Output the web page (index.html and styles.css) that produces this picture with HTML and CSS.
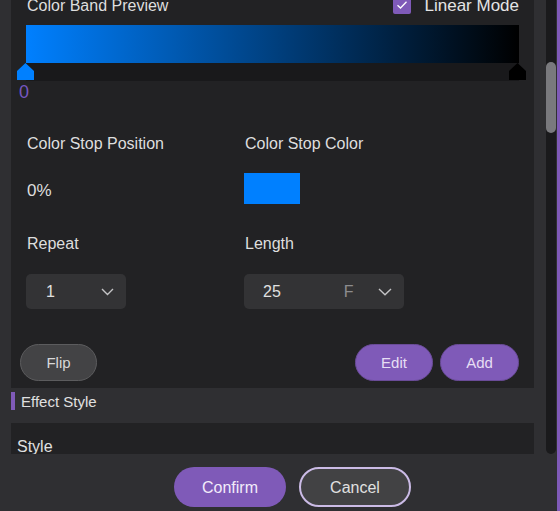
FILE: index.html
```html
<!DOCTYPE html>
<html>
<head>
<meta charset="utf-8">
<link rel="stylesheet" href="styles.css">
</head>
<body>
<div class="shell">
  <div class="main">
    <div class="scroll-area">
      <div class="content">
        <div class="panel">
          <div class="head-row">
            <span class="title">Color Band Preview</span>
            <span class="linear">
              <span class="checkbox">
                <svg width="12" height="10" viewBox="0 0 12 10"><path d="M1.5 5.2 L4.5 8 L10.5 1.8" fill="none" stroke="#ffffff" stroke-width="1.3"/></svg>
              </span>
              <span class="linear-label">Linear Mode</span>
            </span>
          </div>
          <div class="band"></div>
          <div class="track">
            <span class="marker marker-blue"></span>
            <span class="marker marker-black"></span>
          </div>
          <div class="stop-label">0</div>
          <div class="grid">
            <div class="label">Color Stop Position</div>
            <div class="label">Color Stop Color</div>
            <div class="value">0%</div>
            <div class="value"><span class="swatch"></span></div>
            <div class="label label-gap">Repeat</div>
            <div class="label label-gap">Length</div>
            <div class="select select-small">
              <span class="sel-text">1</span>
              <svg class="chev chev-1" width="13" height="8" viewBox="0 0 13 8"><path d="M1 1 L6.5 6.5 L12 1" fill="none" stroke="#c4c4c6" stroke-width="1.4"/></svg>
            </div>
            <div class="select select-wide">
              <span class="sel-text">25</span>
              <span class="unit">F</span>
              <svg class="chev chev-2" width="14" height="8" viewBox="0 0 14 8"><path d="M1 1 L7 6.8 L13 1" fill="none" stroke="#c4c4c6" stroke-width="1.4"/></svg>
            </div>
          </div>
          <div class="btn-row">
            <button class="pill pill-grey">Flip</button>
            <span class="spacer"></span>
            <button class="pill pill-purple pill-edit">Edit</button>
            <button class="pill pill-purple pill-add">Add</button>
          </div>
        </div>
        <div class="section-head">
          <span class="section-bar"></span>
          <span class="section-title">Effect Style</span>
        </div>
        <div class="style-row">Style</div>
      </div>
      <div class="scrollbar"><div class="thumb"></div></div>
    </div>
    <div class="footer">
      <button class="fbtn fbtn-confirm">Confirm</button>
      <button class="fbtn fbtn-cancel">Cancel</button>
    </div>
  </div>
  <div class="edge"></div>
</div>
</body>
</html>
```
FILE: styles.css
```css
* { box-sizing: border-box; }
html, body {
  margin: 0;
  padding: 0;
  width: 560px;
  height: 511px;
  overflow: hidden;
  background: #2f2f32;
  font-family: "Liberation Sans", Arial, sans-serif;
  color: #dedede;
}
.shell {
  display: flex;
  width: 560px;
  height: 511px;
}
.main {
  width: 557px;
  display: flex;
  flex-direction: column;
}
.edge {
  width: 3px;
  background: #7f5ab8;
}
.scroll-area {
  height: 454px;
  display: flex;
  padding-left: 11px;
}
.content {
  width: 523px;
  height: 454px;
  overflow: hidden;
  display: flex;
  flex-direction: column;
}
.scrollbar {
  width: 10px;
  margin-left: 12px;
  height: 454px;
  background: #1a1a1c;
  border-radius: 0 0 5px 5px;
  padding-top: 62px;
}
.thumb {
  width: 10px;
  height: 71px;
  border-radius: 5px;
  background: #79797d;
}
.panel {
  background: #222224;
  height: 388px;
  padding: 0 15px;
  flex: none;
}
.head-row {
  display: flex;
  align-items: center;
  justify-content: space-between;
  height: 18px;
  margin-top: -3px;
}
.title {
  font-size: 16px;
  line-height: 18px;
  padding-left: 1px;
}
.linear {
  display: flex;
  align-items: center;
}
.checkbox {
  width: 18px;
  height: 18px;
  border-radius: 2px;
  background: #7f5ab8;
  display: flex;
  align-items: center;
  justify-content: center;
  margin-top: -2px;
}
.linear-label {
  font-size: 17px;
  line-height: 18px;
  margin-left: 13px;
  color: #e4e4e4;
}
.band {
  margin-top: 10px;
  height: 38px;
  background: linear-gradient(to right, #0080ff 0%, #000000 100%);
}
.track {
  position: relative;
  height: 18px;
  background: #19191b;
}
.marker {
  position: absolute;
  top: 0;
  width: 17px;
  height: 17px;
  clip-path: polygon(50% 0, 100% 47%, 100% 100%, 0 100%, 0 47%);
}
.marker-blue {
  left: -9px;
  background: #0080ff;
}
.marker-black {
  right: -7px;
  background: #000000;
}
.stop-label {
  margin-top: 1px;
  margin-left: -7px;
  font-size: 18px;
  line-height: 20px;
  color: #7657c0;
}
.grid {
  display: grid;
  grid-template-columns: 218px 1fr;
  margin-top: 32px;
}
.label {
  font-size: 16px;
  line-height: 20px;
  padding-left: 1px;
}
.label-gap {
  margin-top: 30px;
}
.value {
  margin-top: 19px;
  height: 31px;
  display: flex;
  align-items: center;
  font-size: 17px;
  padding-left: 1px;
  padding-top: 4px;
}
.swatch {
  display: block;
  width: 56px;
  height: 31px;
  background: #0080ff;
  margin-top: -4px;
  margin-left: -1px;
}
.select {
  margin-top: 20px;
  height: 35px;
  background: #333335;
  border-radius: 5px;
  display: flex;
  align-items: center;
  padding-left: 20px;
  font-size: 16px;
  color: #e0e0e0;
}
.select-small { width: 100px; }
.select-wide { width: 160px; padding-left: 19px; }
.sel-text { line-height: 20px; }
.chev-1 { margin-left: 46px; }
.unit {
  margin-left: 63px;
  color: #8c8c8e;
  line-height: 20px;
}
.chev-2 { margin-left: 24px; }
.btn-row {
  display: flex;
  margin-top: 35px;
  margin-left: -6px;
}
.spacer { flex: 1; }
.pill {
  height: 37px;
  border-radius: 19px;
  font-family: "Liberation Sans", Arial, sans-serif;
  font-size: 15px;
  padding: 0;
  cursor: pointer;
}
.pill-grey {
  width: 77px;
  background: #434345;
  border: 1px solid #5c5c5e;
  color: #d8d8d8;
}
.pill-purple {
  background: #7f5ab8;
  border: 1px solid #6a4c98;
  color: #e6def4;
}
.pill-edit { width: 78px; }
.pill-add { width: 79px; margin-left: 7px; }
.section-head {
  height: 35px;
  flex: none;
  display: flex;
  align-items: flex-start;
}
.section-bar {
  width: 4px;
  height: 18px;
  margin-top: 4px;
  background: #7f5ab8;
}
.section-title {
  font-size: 15px;
  line-height: 18px;
  margin-left: 6px;
  margin-top: 5px;
  color: #e0e0e0;
}
.style-row {
  background: #222224;
  height: 40px;
  flex: none;
  font-size: 16px;
  line-height: 20px;
  padding: 14px 0 0 6px;
  color: #e0e0e0;
}
.footer {
  height: 57px;
  display: flex;
  align-items: flex-start;
  padding-top: 13px;
  padding-left: 174px;
  gap: 13px;
}
.fbtn {
  width: 112px;
  height: 40px;
  border-radius: 20px;
  font-family: "Liberation Sans", Arial, sans-serif;
  font-size: 16px;
  padding: 0;
  padding-top: 1px;
}
.fbtn-confirm {
  background: #7f5ab8;
  border: none;
  color: #f2ecfa;
}
.fbtn-cancel {
  background: #424244;
  border: 2px solid #cbbbe6;
  color: #e0e0e0;
}
```
